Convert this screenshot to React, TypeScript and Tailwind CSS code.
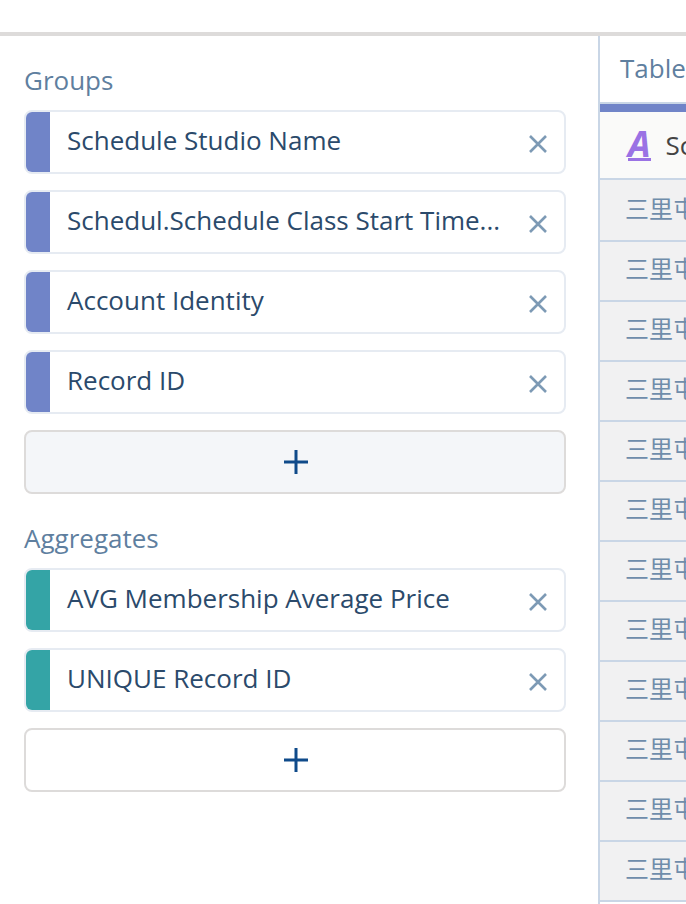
const sans = "font-['Open_Sans',sans-serif]";

function Card({ text, color }: { text: string; color: string }) {
  return (
    <div className="flex h-16 items-stretch overflow-hidden rounded-lg border-2 border-[#e6ebf2] bg-white">
      <div className={`w-6 shrink-0 ${color}`} />
      <div className="flex min-w-0 flex-1 items-center justify-between pl-[17px] pr-4">
        <span className="whitespace-nowrap text-[26px] leading-none text-[#2b4a6b] pb-1">{text}</span>
        <svg width="20" height="20" viewBox="0 0 20 20" className="mt-1 shrink-0" fill="none" stroke="#7d9ab5" strokeWidth="2.6">
          <path d="M2 2 L18 18 M18 2 L2 18" />
        </svg>
      </div>
    </div>
  );
}

function AddButton({ fill }: { fill: string }) {
  return (
    <div className={`flex h-16 items-center justify-center rounded-lg border-2 border-[#dddbda] pl-[2px] ${fill}`}>
      <svg width="24" height="24" viewBox="0 0 24 24" fill="none" stroke="#0f4a8a" strokeWidth="3">
        <path d="M12 0 V24 M0 12 H24" />
      </svg>
    </div>
  );
}

function Row() {
  return (
    <div className="flex h-[60px] items-center whitespace-nowrap border-b-2 border-[#c9d6e6] bg-[#f1f1f2] pb-[6px] pl-[25px] text-[24px] text-[#6f8dab] font-['Noto_Sans_CJK_SC',sans-serif]">
      三里屯
    </div>
  );
}

export default function App() {
  return (
    <div className={`h-[904px] w-[686px] overflow-hidden bg-white ${sans}`}>
      <div className="h-8" />
      <div className="h-1 bg-[#dddbda]" />
      <div className="flex h-[868px]">
        <div className="w-[598px] shrink-0 pl-6 pr-8 pt-[27px]">
          <div className="mb-3 h-[35px] text-[26px] leading-[35px] text-[#5f7f9f]">Groups</div>
          <div className="flex flex-col gap-4">
            <Card text="Schedule Studio Name" color="bg-[#7084c8]" />
            <Card text="Schedul.Schedule Class Start Time..." color="bg-[#7084c8]" />
            <Card text="Account Identity" color="bg-[#7084c8]" />
            <Card text="Record ID" color="bg-[#7084c8]" />
            <AddButton fill="bg-[#f4f6f9]" />
          </div>
          <div className="mb-3 mt-[27px] h-[35px] text-[26px] leading-[35px] text-[#5f7f9f]">Aggregates</div>
          <div className="flex flex-col gap-4">
            <Card text="AVG Membership Average Price" color="bg-[#34a4a6]" />
            <Card text="UNIQUE Record ID" color="bg-[#34a4a6]" />
            <AddButton fill="bg-white" />
          </div>
        </div>
        <div className="min-w-0 flex-1 overflow-hidden border-l-2 border-[#c9d6e6]">
          <div className="flex h-[68px] items-center whitespace-nowrap border-b-2 border-[#c9d6e6] pb-[2px] pl-5 text-[26px] text-[#5f7f9f]">Table</div>
          <div className="h-2 bg-[#7084c8]" />
          <div className="flex h-[68px] items-center whitespace-nowrap border-b-2 border-[#c9d6e6] bg-[#fafaf9] pl-7 text-[26px] text-[#444]">
            <span className="w-[24px] border-b-[3px] border-[#9a72e4] text-center text-[36px] font-bold italic leading-[28px] text-[#9a72e4]">A</span>
            <span className="ml-[15px]">Schedule</span>
          </div>
          <div className="flex h-[62px] items-center whitespace-nowrap border-b-2 border-[#c9d6e6] bg-[#f1f1f2] pb-1 pl-[25px] text-[24px] text-[#6f8dab] font-['Noto_Sans_CJK_SC',sans-serif]">三里屯</div>
          <Row /><Row /><Row /><Row /><Row /><Row /><Row /><Row /><Row /><Row /><Row />
        </div>
      </div>
    </div>
  );
}
